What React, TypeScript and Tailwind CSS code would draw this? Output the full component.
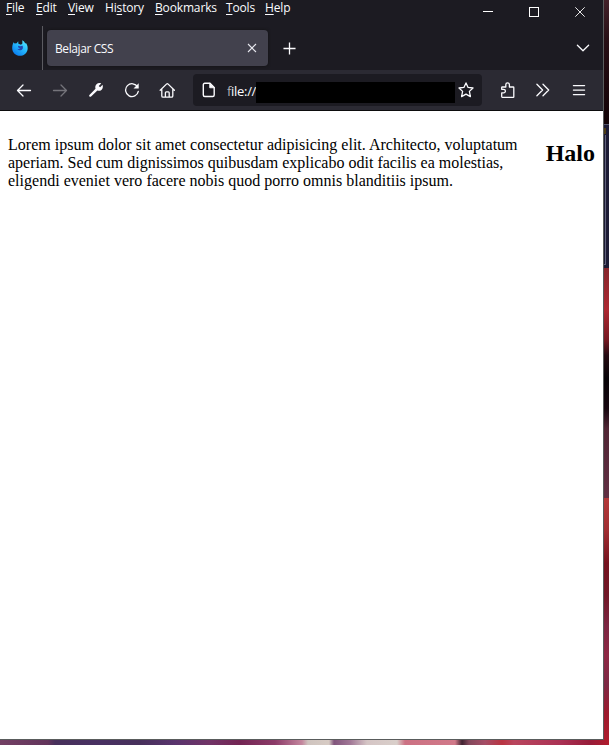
import type { ReactNode } from "react";

type MenuItem = { before: string; key: string; after: string; width: string };

const menu: MenuItem[] = [
  { before: "", key: "F", after: "ile", width: "w-[18px]" },
  { before: "", key: "E", after: "dit", width: "w-5" },
  { before: "", key: "V", after: "iew", width: "w-[25px]" },
  { before: "Hi", key: "s", after: "tory", width: "w-[38px]" },
  { before: "", key: "B", after: "ookmarks", width: "w-[59px]" },
  { before: "", key: "T", after: "ools", width: "w-[27px]" },
  { before: "", key: "H", after: "elp", width: "w-[25px]" },
];

function Icon({ children, className = "" }: { children: ReactNode; className?: string }) {
  return (
    <svg
      viewBox="0 0 16 16"
      className={`size-4 shrink-0 ${className}`}
      fill="none"
      stroke="currentColor"
      strokeWidth="1.3"
      strokeLinecap="round"
      strokeLinejoin="round"
    >
      {children}
    </svg>
  );
}

function BrowserLogo() {
  return (
    <svg viewBox="0 0 16 16" className="ml-3 size-4 shrink-0">
      <defs>
        <linearGradient id="flame" x1="1" y1="0" x2="0.2" y2="1">
          <stop offset="0" stopColor="#5cf0ff" />
          <stop offset="0.5" stopColor="#25b8fc" />
          <stop offset="1" stopColor="#0878ee" />
        </linearGradient>
      </defs>
      <path
        d="M1.5 2.2 2.6 3.6 4.7 3.3 6.2 1.2 6.4 3.7 9 4.8 10.4 3.6 10.3.3C12 1.2 12.8 2.6 13.2 3.5L14 3C15.6 5.2 16 7.6 15.5 10 14.5 13.7 11.6 15.8 8 15.8 3.7 15.8.2 12.6.2 8.2.2 6 .7 4 1.5 2.2Z"
        fill="url(#flame)"
      />
      <path d="M6.2 5.8 8.2 6.3 10.6 5.8C11.5 8.6 10.2 10.3 8.3 10.3 6.6 10.3 5.6 9.6 5.3 8.8 6.8 9.2 7.8 8.9 8.3 8.2 7.4 8.2 6.8 7.6 6 7.2Z" fill="#2446ad" />
    </svg>
  );
}

function MenuBar() {
  return (
    <div className="flex h-[26px] shrink-0 justify-between">
      <nav className="flex gap-3 pl-1.5 text-[12px] leading-4 tracking-[-0.15px]">
        {menu.map((m) => (
          <span key={m.key + m.after} className={`${m.width} whitespace-nowrap`}>
            {m.before}
            <u className="underline decoration-1 underline-offset-2">{m.key}</u>
            {m.after}
          </span>
        ))}
      </nav>
      <div className="flex gap-9 pt-[7px] pr-[18px]">
        <svg viewBox="0 0 10 10" className="size-2.5" shapeRendering="crispEdges">
          <path d="M0 4.5H10" stroke="white" />
        </svg>
        <svg viewBox="0 0 10 10" className="size-2.5" shapeRendering="crispEdges">
          <path d="M.5.5H9.5V9.5H.5Z" stroke="white" fill="none" />
        </svg>
        <svg viewBox="0 0 10 10" className="size-2.5">
          <path d="m.3.3 9.4 9.4M9.7.3.3 9.7" stroke="white" strokeWidth=".9" />
        </svg>
      </div>
    </div>
  );
}

function TabStrip() {
  return (
    <div className="flex h-11 shrink-0 items-center">
      <BrowserLogo />
      <div className="ml-3.5 h-full w-px shrink-0 bg-[#5b5b61]" />
      <div className="ml-1 flex h-9 w-[221px] shrink-0 items-center justify-between rounded bg-[#42414d] pr-2.5 pl-2 shadow-[0_0_3px_#111]">
        <span className="pt-0.5 text-[12px] tracking-[-0.4px] whitespace-nowrap">Belajar CSS</span>
        <svg viewBox="0 0 12 12" className="size-3" fill="none" stroke="#e8e8ef" strokeWidth="1.1">
          <path d="m2 2 8 8M10 2 2 10" />
        </svg>
      </div>
      <svg viewBox="0 0 14 14" className="mt-px ml-[15px] size-[13px]" fill="none" stroke="currentColor" strokeWidth="1.4">
        <path d="M7 .5V13.5M.5 7H13.5" />
      </svg>
      <Icon className="mr-3 ml-auto">
        <path d="m2.4 5.2 5.6 5.5 5.6-5.5" />
      </Icon>
    </div>
  );
}

function Toolbar() {
  return (
    <div className="flex h-10 shrink-0 items-center bg-[#2b2a33]">
      <div className="flex w-[193px] shrink-0 gap-5 pl-4">
        <Icon>
          <path d="M14.5 8.5H1.5M7 3 1.5 8.5 7 14" />
        </Icon>
        <Icon className="text-[#75747b]">
          <path d="M1.5 8.5H14.5M9 3 14.5 8.5 9 14" />
        </Icon>
        <svg viewBox="0 0 16 16" className="size-4 shrink-0" fill="currentColor">
          <path d="M13.2 1.4 10.7 3.9 12.1 5.3 14.6 2.8C15.2 5 14.8 6.8 13.4 7.9 12.2 8.9 10.8 9 9.4 8.5L3.1 14.5C2.1 15.4.5 13.9 1.4 12.9L7.5 6.7C7 5 7.3 3.4 8.5 2.3 9.7 1.1 11.4.8 13.2 1.4Z" />
        </svg>
        <Icon>
          <path d="M13.6 5A6.4 6.4 0 1 0 14.3 9.3" />
          <path d="M14.7 1.2V6.4H9.5Z" fill="currentColor" stroke="none" />
        </Icon>
        <Icon className="-ml-px">
          <path d="M1.2 8.3 7.7 1.9Q8.3 1.4 8.9 1.9L15.4 8.3M2.8 7.2V13.9Q2.8 15.1 4.1 15.1H12.5Q13.8 15.1 13.8 13.9V7.2M6.4 15V10.7Q6.4 9.8 7.3 9.8H9.3Q10.2 9.8 10.2 10.7V15" />
        </Icon>
      </div>
      <div className="flex h-8 w-[289px] shrink-0 items-center rounded bg-[#1c1b22] pr-2 pl-2">
        <Icon>
          <path d="M3.8 1.3H9L13.2 5.5V13Q13.2 14.5 11.7 14.5H3.8Q2.3 14.5 2.3 13V2.8Q2.3 1.3 3.8 1.3Z" strokeWidth="1.4" />
          <path d="M8.7 1.3V5.8H13.2Z" fill="currentColor" strokeWidth=".8" />
        </Icon>
        <span className="ml-2.5 w-[29px] shrink-0 pt-0.5 text-[13px] leading-5 tracking-[-0.3px] whitespace-nowrap">
          <span className="text-[#b2b2b8]">f</span>ile://
        </span>
        <div className="mt-[5px] h-[21px] w-[199px] shrink-0 bg-black" />
        <Icon className="ml-[3px]">
          <path d="M8 .9 10.1 5.4 15 6 11.4 9.4 12.4 14.6 8 12.1 3.6 14.6 4.6 9.4 1 6 5.9 5.4Z" />
        </Icon>
      </div>
      <div className="flex gap-5 pl-[18px]">
        <Icon>
          <path d="M1.7 14.5V10.9H3.6A1.8 1.8 0 0 0 3.6 7.3H1.7V5.6Q1.7 5 2.3 5H5.8V2.7A1.8 1.8 0 0 1 9.4 2.7V5H13.2Q13.8 5 13.8 5.6V14.9Q13.8 15.3 13.2 15.3H2.3Q1.7 15.3 1.7 14.5Z" />
        </Icon>
        <Icon className="-ml-px">
          <path d="m1.9 2.2 5.7 5.8-5.7 5.8M8 2.2 13.7 8 8 13.8" />
        </Icon>
        <Icon>
          <path d="M2.4 3.5H13.6M2.4 8H13.6M2.4 12.5H13.6" strokeWidth="1.25" />
        </Icon>
      </div>
    </div>
  );
}

function Page() {
  return (
    <main className="flex grow items-start justify-between border-t border-[#0c0c0d] bg-white pt-[25px] pr-2 pl-2 font-['Liberation_Serif',serif] text-black">
      <p className="text-[16px] leading-[18px] tracking-[0.01px] whitespace-nowrap">
        Lorem ipsum dolor sit amet consectetur adipisicing elit. Architecto, voluptatum
        <br />
        aperiam. Sed cum dignissimos quibusdam explicabo odit facilis ea molestias,
        <br />
        eligendi eveniet vero facere nobis quod porro omnis blanditiis ipsum.
      </p>
      <h2 className="mt-1 text-[24px] leading-[27px] font-bold">Halo</h2>
    </main>
  );
}

export default function App() {
  return (
    <div className="flex h-[745px] w-[609px] flex-col overflow-hidden font-['Open_Sans','Noto_Sans',sans-serif]">
      <div className="flex h-[740px] shrink-0">
        <div className="flex w-[604px] shrink-0 flex-col border-r border-b border-[#595c5c] bg-[#1c1b22] text-[#fbfbfe]">
          <MenuBar />
          <TabStrip />
          <Toolbar />
          <Page />
        </div>
        <div className="flex w-[5px] shrink-0 flex-col">
          <div className="h-[124px] bg-linear-to-b from-[#43222a] via-[#281016] via-30% to-[#120306]" />
          <div className="flex h-[144px] flex-col border-t border-[#55566c] bg-[#1c1b35]">
            <div className="mt-[3px] h-[6px] w-[2px] bg-[#4c3b14]" />
            <div className="mt-px h-[130px] w-[2px] border-r border-b border-[#62637b]" />
          </div>
          <div className="h-[230px] bg-[linear-gradient(to_bottom,#86262c_0%,#ad2831_18%,#771922_31%,#250b12_38%,#080408_48%,#170810_61%,#512635_70%,#622f43_100%)]" />
          <div className="grow bg-[linear-gradient(to_bottom,#b33839_0%,#a12e32_13%,#75131f_27%,#711827_40%,#7c2642_53%,#8e2844_65%,#7d2944_77%,#9d1a2d_89%,#ae1d2d_100%)]" />
        </div>
      </div>
      <div className="h-[5px] shrink-0 bg-[linear-gradient(to_right,#734064_0px,#62345b_48px,#47305b_55px,#483062_100px,#47305b_140px,#59346d_175px,#713366_210px,#732453_240px,#8c3b68_275px,#c4879e_302px,#cfc4bf_308px,#d7cbc4_329px,#81557c_334px,#a17796_350px,#d5c5c5_367px,#d9cfca_397px,#cc7183_405px,#d17989_455px,#402331_462px,#83485b_469px,#a54d66_485px,#b93441_502px,#b9455d_514px,#aa3154_560px,#971c39_590px,#b01b2c_609px)]" />
    </div>
  );
}
